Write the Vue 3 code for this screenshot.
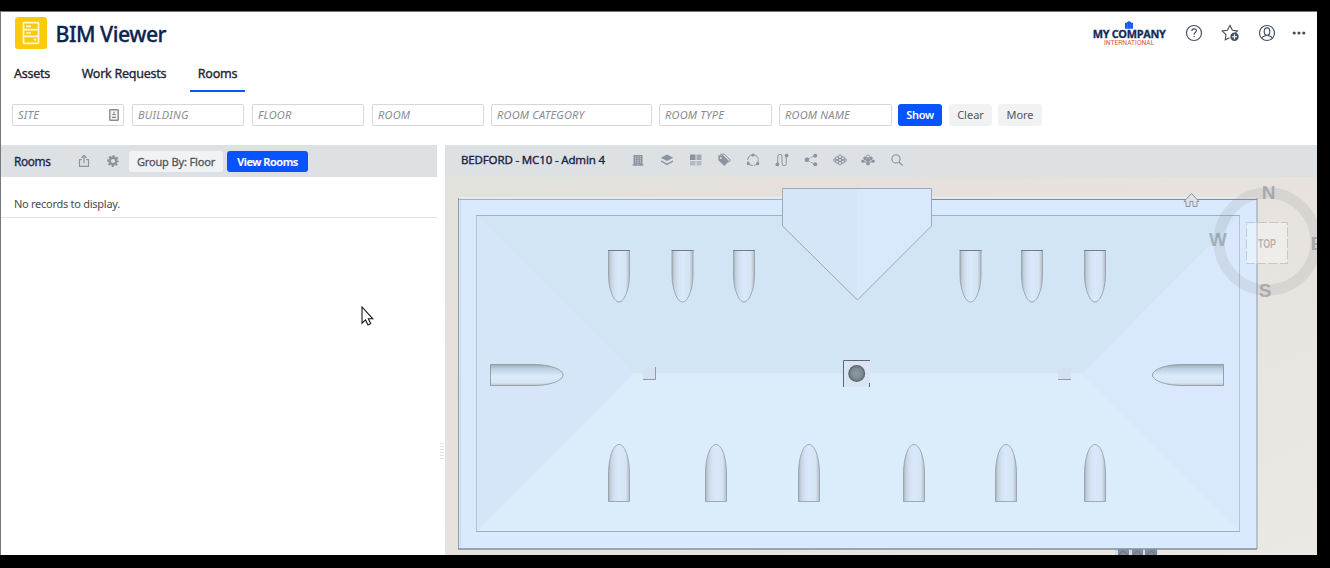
<script setup>
const tabs = [
  { label: 'Assets', cls: 'assets' },
  { label: 'Work Requests', cls: 'work' },
  { label: 'Rooms', cls: 'rooms active' },
]
const filters = [
  { label: 'SITE', cls: 'w-std', icon: true },
  { label: 'BUILDING', cls: 'w-std' },
  { label: 'FLOOR', cls: 'w-std' },
  { label: 'ROOM', cls: 'w-std tight' },
  { label: 'ROOM CATEGORY', cls: 'w-wide tight' },
  { label: 'ROOM TYPE', cls: 'w-mid tight' },
  { label: 'ROOM NAME', cls: 'w-mid' },
]
const topDormers = [619, 682.5, 744, 970.5, 1032, 1095]
const bottomDormers = [619, 716, 809, 914, 1006, 1095]
const grip = [443, 446, 449, 452, 455, 458]
</script>

<template>
  <div class="screen">
    <div class="window">
      <header class="header">
        <svg class="logo" viewBox="0 0 32 32">
          <rect width="32" height="32" rx="3" fill="#fbca0a" />
          <g fill="none" stroke="#fff8d8" stroke-width="1.7">
            <rect x="8.5" y="5.7" width="15" height="20.6" rx=".6" />
            <path d="M8 12.7h16M8 19.3h16M11 9.3h5M11 16h5" />
          </g>
          <circle cx="20" cy="22.6" r="1.2" fill="#fff8d8" />
        </svg>
        <h1 class="title">BIM Viewer</h1>
        <div class="company">
          <svg class="towers" viewBox="0 0 10 9">
            <path d="M.5 2h2.200V1h1.200V.2h2.200V1h1.200v1h2.200V8.600h-9z" fill="#1558f5" />
            <path d="M3.200 3v5.600M6.800 3v5.600" stroke="#5b8dfb" stroke-width=".5" />
          </svg>
          <b>MY COMPANY</b>
          <span>INTERNATIONAL</span>
        </div>
        <div class="actions">
          <svg class="act" viewBox="0 0 18 18">
            <circle cx="9" cy="9" r="7.500" />
            <path d="M6.800 7.100c0-1.500 1-2.300 2.300-2.300s2.300.8 2.300 2c0 1.700-2.300 1.800-2.300 3.600v.3M9.100 12v1.300" />
          </svg>
          <svg class="act" viewBox="0 0 18 18">
            <path d="M8.500 13.800 4.300 15.800l.6-5.100L1.200 7l5.200-.8L9 1.500l2.400 4.700 5 .8-2 1.800" />
            <circle cx="13.500" cy="12.700" r="4.200" fill="#454e5d" stroke="none" />
            <path d="M11 12.700h5M13.500 10.200v5" stroke="#fff" />
          </svg>
          <svg class="act" viewBox="0 0 18 18">
            <circle cx="9" cy="9" r="7.500" />
            <ellipse cx="9" cy="7.600" rx="2.800" ry="3.700" />
            <path d="M3.800 14.100c.6-1.800 2.300-1.900 3.600-2.400v-1.300M14.200 14.100c-.6-1.800-2.300-1.900-3.600-2.400v-1.300" />
          </svg>
          <svg class="dots" viewBox="0 0 14 4" fill="#454e5d">
            <circle cx="2.200" cy="2" r="1.600" /><circle cx="7" cy="2" r="1.600" /><circle cx="11.800" cy="2" r="1.600" />
          </svg>
        </div>
      </header>

      <nav class="tabs">
        <div v-for="t in tabs" :key="t.label" class="tab" :class="t.cls">{{ t.label }}</div>
      </nav>

      <div class="filters">
        <div v-for="f in filters" :key="f.label" class="field" :class="f.cls">
          <span>{{ f.label }}</span>
          <svg v-if="f.icon" class="pick" viewBox="0 0 10 12">
            <rect x=".8" y=".8" width="8.400" height="10.400" rx=".5" fill="#f4f4f4" stroke="#8c8c8c" stroke-width="1.400" />
            <path d="M5 2.800v1.700M3.300 5.500h3.400M3 8.300h4" fill="none" stroke="#808080" stroke-width="1.200" />
          </svg>
        </div>
        <div class="btn primary show">Show</div>
        <div class="btn clear">Clear</div>
        <div class="btn more">More</div>
      </div>

      <main class="panes">
        <section class="left">
          <div class="bar">
            <span class="bar-title">Rooms</span>
            <svg class="share" viewBox="0 0 12 14" fill="none" stroke="#8c93a0" stroke-width="1.200">
              <path d="M3.800 5.600H1.500v6.800h9V5.600H8.200M6 9.300V1.500M3.500 4 6 1.400 8.500 4" />
            </svg>
            <svg class="gear" viewBox="0 0 12 12">
              <circle cx="6" cy="6" r="3.300" fill="none" stroke="#8c93a0" stroke-width="2.400" />
              <circle cx="6" cy="6" r="5" fill="none" stroke="#8c93a0" stroke-width="1.800" stroke-dasharray="2.200 1.727" stroke-dashoffset="1.100" />
            </svg>
            <div class="btn group">Group By: Floor</div>
            <div class="btn primary view">View Rooms</div>
          </div>
          <div class="empty">No records to display.</div>
          <svg class="cursor" viewBox="0 0 13 20">
            <path d="M1 1v16.200l3.500-3.300 2.500 5 2.700-1.300-2.300-4.800h4.500z" fill="#fff" stroke="#15151f" stroke-width="1.100" />
          </svg>
        </section>
        <div class="splitter">
          <svg viewBox="437 177 8 378">
            <path v-for="y in grip" :key="y" :d="`M440 ${y + 0.5}h4`" stroke="#dfe1e4" />
          </svg>
        </div>
        <section class="right">
          <div class="bar">
            <span class="view-title">BEDFORD - MC10 - Admin 4</span>
            <div class="tools">
              <svg viewBox="0 0 14 14" fill="#8c93a0">
                <path d="M2.500 2h9v9.500h.9v1.200H1.600v-1.200h.9z" />
                <path d="M4.700 3.200v7.300M7 3.200v9M9.300 3.200v7.300" stroke="#c8ccd1" stroke-dasharray="1.200 .7" />
              </svg>
              <svg viewBox="0 0 14 14" fill="#8c93a0">
                <path d="m7 1.400 6.200 3.300L7 8 .8 4.700z" />
                <path d="m1 7.200 6 3.200 6-3.200v1.600L7 12.300 1 8.800z" />
              </svg>
              <svg viewBox="0 0 14 14" fill="#b6bac3">
                <path d="M1 1.500h5.500V7H1z" fill="#8c93a0" /><path d="M1 8h5.500v4.600H1zM7.500 8h5v4.600h-5z" />
                <path d="M7.500 1.500h5V7h-5z" fill="#a2a8b2" />
              </svg>
              <svg viewBox="0 0 14 14" fill="#8c93a0">
                <path d="M1.200 2.500 6 2l6 6-4.600 5L1.500 7.500z" />
                <path d="M3 1.200h4.500L13.200 7l-1.500 2.300" fill="none" stroke="#8c93a0" />
                <circle cx="3.800" cy="5" r="1" fill="#dee1e4" />
              </svg>
              <svg viewBox="0 0 14 14" fill="#8c93a0">
                <circle cx="7" cy="7.200" r="5.300" fill="none" stroke="#8c93a0" stroke-dasharray="7 1.200" />
                <circle cx="7" cy="2" r="1.600" /><circle cx="2.300" cy="10.700" r="1.600" /><circle cx="11.700" cy="10.700" r="1.600" />
              </svg>
              <svg viewBox="0 0 14 14" fill="#8c93a0">
                <path d="M2.800 10V3.500a2.100 2.100 0 0 1 4.200 0v7a2.100 2.100 0 0 0 4.200 0V4" fill="none" stroke="#8c93a0" />
                <circle cx="2.400" cy="11.400" r="1.900" /><circle cx="11.600" cy="2.600" r="1.900" />
              </svg>
              <svg viewBox="0 0 14 14" fill="#8c93a0">
                <path d="M2.600 6.800 11.200 2.600M2.600 7l8.600 4.400" fill="none" stroke="#8c93a0" stroke-width=".8" stroke-dasharray="4 1" />
                <circle cx="2.900" cy="6.800" r="2.200" /><circle cx="11.200" cy="2.700" r="2" /><circle cx="11.200" cy="11.300" r="2" />
              </svg>
              <svg viewBox="0 0 14 14" fill="none" stroke="#8c93a0">
                <circle cx="7" cy="3.700" r="1.700" /><circle cx="7" cy="7" r="1.600" /><circle cx="7" cy="10.200" r="1.700" />
                <circle cx="4" cy="5.300" r="1.600" /><circle cx="10" cy="5.300" r="1.600" /><circle cx="4" cy="8.600" r="1.600" />
                <circle cx="10" cy="8.600" r="1.600" /><circle cx="1.900" cy="7.200" r="1.400" /><circle cx="12.100" cy="7.200" r="1.400" />
              </svg>
              <svg viewBox="0 0 14 14" fill="#8c93a0" stroke="#8c93a0" stroke-width=".9">
                <circle cx="7" cy="3.500" r="1.500" fill="none" /><circle cx="7" cy="7" r="1.400" /><circle cx="7" cy="10.400" r="1.600" />
                <circle cx="4" cy="5.200" r="1.300" /><circle cx="10" cy="5.200" r="1.300" /><circle cx="4" cy="7.900" r="1.300" fill="none" />
                <circle cx="10" cy="7.900" r="1.300" fill="none" /><circle cx="1.800" cy="8.200" r="1.200" /><circle cx="12.200" cy="8.200" r="1.200" />
              </svg>
              <svg viewBox="0 0 14 14" fill="none" stroke="#8c93a0" stroke-width="1.100">
                <circle cx="6" cy="5.900" r="4.100" /><path d="m9 9 3.600 3.500" />
              </svg>
            </div>
          </div>

          <svg class="scene" viewBox="445 177 872 378">
            <defs>
              <linearGradient id="ground" x1="0" y1="0" x2="1" y2="1">
                <stop offset="0" stop-color="#e0e2dc" /><stop offset=".2" stop-color="#e5e0dc" />
                <stop offset=".6" stop-color="#e7e3df" /><stop offset="1" stop-color="#ece8e3" />
              </linearGradient>
              <linearGradient id="barrelX">
                <stop offset="0" stop-color="#a9b2ba" /><stop offset=".12" stop-color="#c6d2df" /><stop offset=".3" stop-color="#d4e2f3" />
                <stop offset=".5" stop-color="#dae8fc" /><stop offset=".82" stop-color="#d5e3f3" /><stop offset="1" stop-color="#b4bcc5" />
              </linearGradient>
              <linearGradient id="barrelY" x1="0" y1="0" x2="0" y2="1">
                <stop offset="0" stop-color="#9da8b0" /><stop offset=".2" stop-color="#bed0df" />
                <stop offset=".55" stop-color="#daebfa" /><stop offset=".85" stop-color="#d9e6f4" /><stop offset="1" stop-color="#bfc6cd" />
              </linearGradient>
              <radialGradient id="vent">
                <stop offset="0" stop-color="#8d9aa5" /><stop offset=".65" stop-color="#7d8993" /><stop offset="1" stop-color="#5c6369" />
              </radialGradient>
            </defs>
            <rect x="445" y="177" width="872" height="378" fill="url(#ground)" />
            <path d="M1115 549h43v6h-43z" fill="#cfdeee" />
            <path d="M1118 549h11v6h-11zM1132 549h11v6h-11zM1145 549h12v6h-12z" fill="#838c98" />
            <path d="M1119 555q4-7 9 0M1133 555q4-7 9 0M1147 555q4-7 9 0" fill="none" stroke="#68727e" />

            <path d="M459 198h798v351H459z" fill="#daeafe" />
            <path d="M459 197.500h799" stroke="#eceef0" />
            <path d="M460.500 199v349" stroke="#c6d8e8" />
            <path d="M459 199.500h798" stroke="#a6b1c1" />
            <path d="M459 198.500h324M932 198.500h325" stroke="#dfe5eb" />
            <path d="M458.500 198v351M1257 198v351" stroke="#929ba4" />
            <path d="M932 199.500h325" stroke="#848d99" />
            <path d="M458 549h799" stroke="#858e96" stroke-width="1.500" />
            <path d="M476 215h764v317H476z" fill="#d9e8fd" />
            <path d="M476 215 634 373.500 476 532z" fill="#d7e5f8" />
            <path d="M476 215h764L1082 373.500H634z" fill="#d1e5f5" />
            <path d="M476 532 634 373.500h448L1240 532z" fill="#dbecfb" />
            <path d="M476.500 215v316M1239.500 215v316" stroke="#b4c2d3" />
            <path d="M476 215.500h764M476 531.500h764" stroke="#a0b0c0" />

            <path d="M782.500 188.500H932v38L857.500 300 782.500 226z" fill="#d9e8fd" />
            <path d="M782.500 188.500h75V300l-75-74z" fill="#d7e5f8" />
            <path d="M782.500 226v-37.500h149V226" fill="none" stroke="#9baabc" />
            <path d="m782.500 226 75 74 74-74" fill="none" stroke="#8797a3" stroke-width=".8" />

            <g fill="url(#barrelX)" stroke="#8e9aa6" stroke-width=".8">
              <path v-for="x in topDormers" :key="'t' + x" :d="`M${x - 10.5} 250.5h21v24c0 14-5 27.5-10.5 27.5s-10.5-13.5-10.5-27.5z`" />
              <path v-for="x in bottomDormers" :key="'b' + x" :d="`M${x - 10.5} 501.5h21v-27c0-15-4-30-10.5-30s-10.5 15-10.5 30z`" />
            </g>
            <path v-for="x in topDormers" :key="'l' + x" :d="`M${x - 11} 250.5h22`" stroke="#747d87" />
            <g fill="url(#barrelY)" stroke="#8e9aa6" stroke-width=".9">
              <path d="M490.500 364.500h43c17 0 29.500 5 29.500 10.500s-12.500 10.500-29.500 10.500h-43z" />
              <path d="M1223.500 364.500h-41c-17 0-30 5-30 10.500s13 10.500 30 10.500h41z" />
            </g>

            <path d="M643 367h13v13h-13zM1058 367h13v13h-13z" fill="#d5e0f1" />
            <path d="M643 379.500h12.500V367M1058 379.500h13" fill="none" stroke="#8e9baa" />
            <path d="M843 360h27v27h-27z" fill="#d9e4f5" />
            <path d="M843.500 387v-26.500H870M869.500 383v4" fill="none" stroke="#5f6971" />
            <circle cx="856.700" cy="373.500" r="8.500" fill="url(#vent)" />

            <g class="compass">
              <circle cx="1267.500" cy="241.500" r="48.500" fill="none" stroke="#8a8f92" stroke-opacity=".17" stroke-width="11" />
              <rect x="1246.500" y="222.500" width="41" height="41" fill="#fff" fill-opacity=".34" stroke="#b5bbc0" stroke-opacity=".7" stroke-dasharray="9 2.500" />
              <g fill="#777f86" fill-opacity=".52" text-anchor="middle" font-weight="700" font-size="19">
                <text x="1268.500" y="199">N</text><text x="1218" y="246">W</text>
                <text x="1265" y="297">S</text><text x="1317" y="250">E</text>
                <text x="1267" y="248" font-size="12.500" textLength="18" lengthAdjust="spacingAndGlyphs">TOP</text>
              </g>
            </g>
            <path d="M1184 201.500 1191.500 193.500 1199 201.500h-2v5h-4v-5h-3v5h-4v-5z" fill="#dce2e6" stroke="#8d969e" stroke-linejoin="round" />
          </svg>
        </section>
      </main>
    </div>
  </div>
</template>

<style>
body { background: #000; overflow: hidden; }
</style>
<style scoped>
* { box-sizing: border-box; }
.screen { width: 1330px; height: 568px; background: #000; padding: 11px 13px 13px 0; font-family: "Noto Sans", "Open Sans", sans-serif; }
.window { height: 544px; background: #fff; border-left: 1px solid #77777b; border-top: 1px solid #77777b; display: flex; flex-direction: column; }
svg { display: block; flex: none; }
.header { height: 46px; display: flex; align-items: center; padding: 0 11px 4px 14px; flex: none; }
.logo { width: 32px; height: 32px; }
.title { margin: 1px 0 0 8.500px; font-size: 21.300px; line-height: 30px; font-weight: 500; letter-spacing: -.5px; color: #0d2350; -webkit-text-stroke: .3px #0d2350; white-space: nowrap; }
.company { margin-left: auto; padding-top: 1px; width: 74px; display: flex; flex-direction: column; align-items: center; white-space: nowrap; }
.towers { width: 10px; height: 8px; }
.company b { font-family: "Open Sans", sans-serif; font-weight: 700; font-size: 10.900px; line-height: 10px; letter-spacing: -.3px; color: #142c59; -webkit-text-stroke: .3px #142c59; }
.company span { font-family: Roboto, sans-serif; font-size: 6.700px; line-height: 8px; color: #d9553f; }
.actions { display: flex; align-items: center; margin-left: 19px; }
.act { width: 18px; height: 18px; margin-right: 18.300px; fill: none; stroke: #454e5d; stroke-width: 1.150; }
.dots { width: 14px; height: 4px; margin-left: -2px; }
.tabs { height: 34px; display: flex; flex: none; font-size: 12.500px; color: #26262f; -webkit-text-stroke: .35px #26262f; letter-spacing: -.25px; line-height: 32px; padding-left: 4px; }
.tab { text-align: center; white-space: nowrap; border-bottom: 2px solid transparent; }
.assets { width: 54px; }
.work { width: 104px; margin-left: 13px; }
.rooms { width: 55px; margin-left: 14px; }
.active { border-bottom-color: #0a55ff; }
.filters { display: flex; height: 22px; margin: 12px 0 0 11px; flex: none; }
.field { display: flex; align-items: center; justify-content: space-between; height: 22px; border: 1px solid #d3d8da; border-radius: 2px; padding: 0 4px 0 5px; margin-right: 8px; color: #888c92; font-size: 11px; line-height: 18px; letter-spacing: .2px; font-style: italic; white-space: nowrap; }
.field span { padding-bottom: 1px; }
.tight { margin-right: 7px; }
.w-std { width: 112px; }
.w-std.tight { margin-right: 7px; }
.w-wide { width: 161px; }
.w-mid { width: 113px; }
.w-mid:not(.tight) { margin-right: 6px; }
.pick { width: 10px; height: 12px; }
.btn { height: 22px; border-radius: 3px; background: #f1f2f4; color: #51565e; font-size: 11px; line-height: 22px; text-align: center; white-space: nowrap; flex: none; }
.primary { background: #0753ff; color: #fff; font-weight: 600; letter-spacing: -.35px; }
.show { width: 44px; margin-right: 7px; }
.clear { width: 43px; margin-right: 6px; }
.more { width: 44px; }
.panes { display: flex; margin-top: 19px; flex: 1; min-height: 0; }
.left { width: 436px; position: relative; }
.bar { height: 32px; background: #dde1e4; display: flex; align-items: center; padding-left: 13px; }
.bar-title { width: 64px; color: #1d2645; font-size: 11.800px; letter-spacing: -.35px; -webkit-text-stroke: .3px #1d2645; }
.share { width: 12px; height: 14px; }
.gear { width: 12px; height: 12px; margin-left: 17px; }
.bar .btn { height: 21px; line-height: 21px; }
.group { width: 94px; margin-left: 10px; letter-spacing: -.15px; -webkit-text-stroke: .3px #51565e; }
.view { width: 81px; margin-left: 4px; -webkit-text-stroke: .2px #fff; }
.bar .view { letter-spacing: -.43px; }
.empty { height: 41px; border-bottom: 1px solid #e1e3e5; padding-left: 13px; font-size: 11px; letter-spacing: -.27px; line-height: 54px; color: #4a4a4e; }
.cursor { position: absolute; left: 360px; top: 161px; width: 13px; height: 20px; }
.splitter { width: 8px; padding-top: 32px; flex: none; }
.splitter svg { width: 8px; height: 378px; }
.right { width: 872px; flex: none; }
.right .bar { padding: 0 0 3px 16px; }
.view-title { width: 170px; color: #1a2548; font-size: 11.500px; letter-spacing: -.16px; -webkit-text-stroke: .35px #1a2548; white-space: nowrap; }
.tools { display: flex; gap: 14.800px; }
.tools svg { width: 14px; height: 14px; }
.scene { width: 872px; height: 378px; }
.compass { font-family: "Liberation Sans", Arial, sans-serif; }
</style>
